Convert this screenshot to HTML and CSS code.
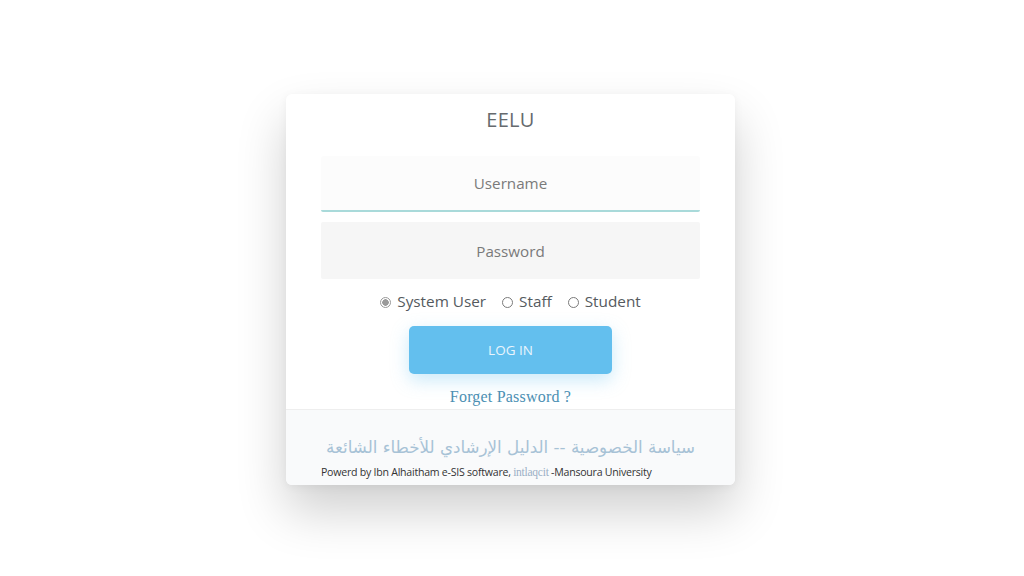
FILE: index.html
```html
<!DOCTYPE html>
<html lang="en">
<head>
<meta charset="utf-8">
<title>EELU</title>
<link rel="stylesheet" href="styles.css">
</head>
<body>
<div class="card">
  <div class="body">
    <h1 class="title">EELU</h1>
    <div class="field field-user">Username</div>
    <div class="field field-pass">Password</div>
    <div class="radios">
      <label class="radio"><span class="dot checked"></span>System User</label>
      <label class="radio"><span class="dot"></span>Staff</label>
      <label class="radio"><span class="dot"></span>Student</label>
    </div>
    <button class="login">LOG IN</button>
    <a class="forget">Forget Password ?</a>
  </div>
  <div class="footer">
    <div class="arabic" dir="rtl">سياسة الخصوصية -- الدليل الإرشادي للأخطاء الشائعة</div>
    <div class="powered">Powerd by Ibn Alhaitham e-SIS software, <span class="brand">intlaqcit</span> -Mansoura University</div>
  </div>
</div>
</body>
</html>
```
FILE: styles.css
```css
html, body {
  margin: 0;
  padding: 0;
  background: #ffffff;
}
html {
  height: 100%;
}
body {
  font-family: "Open Sans", "Noto Sans", sans-serif;
  padding: 94px 3px 0 0;
  min-height: 100%;
  box-sizing: border-box;
}
.card {
  width: 449px;
  margin: 0 auto;
  background: #ffffff;
  border-radius: 6px;
  box-shadow: 0 26px 50px rgba(0, 0, 0, 0.19), 0 2px 10px rgba(0, 0, 0, 0.05);
  overflow: hidden;
}
.body {
  padding: 12px 35px 0;
  display: flex;
  flex-direction: column;
  align-items: center;
}
.title {
  margin: 0;
  font-size: 20px;
  font-weight: 400;
  color: #666a6e;
  line-height: 27px;
  letter-spacing: 0.3px;
}
.field {
  width: 100%;
  box-sizing: border-box;
  text-align: center;
  font-size: 15.2px;
  color: #7a7a7a;
  display: flex;
  align-items: center;
  justify-content: center;
}
.field-user {
  margin-top: 23px;
  height: 56px;
  background: #fcfcfc;
  border-bottom: 2px solid #a9dada;
  border-radius: 3px 3px 2px 2px;
}
.field-pass {
  margin-top: 10px;
  height: 57px;
  background: #f6f6f6;
  border-radius: 2px;
}
.radios {
  margin-top: 10px;
  display: flex;
  gap: 16px;
  height: 24px;
  align-items: center;
  font-size: 15.3px;
  color: #555a5e;
}
.radio {
  display: flex;
  align-items: center;
  gap: 6px;
}
.dot {
  width: 11px;
  height: 11px;
  border: 1px solid #7a7a7a;
  border-radius: 50%;
  box-sizing: border-box;
  position: relative;
  top: 1px;
}
.dot.checked {
  border-color: #999;
  background: radial-gradient(circle, #9a9a9a 0 3px, #ffffff 3.5px);
}
.login {
  margin-top: 13px;
  width: 203px;
  height: 48px;
  border: none;
  border-radius: 5px;
  background: #63bfee;
  color: #e9f5fd;
  font-family: "Open Sans", "Noto Sans", sans-serif;
  font-size: 13.5px;
  box-shadow: 0 6px 18px rgba(99, 191, 238, 0.35);
}
.forget {
  margin-top: 12px;
  font-family: "Liberation Serif", serif;
  font-size: 16px;
  color: #4b8fb3;
  line-height: 22px;
  letter-spacing: 0.2px;
}
.footer {
  margin-top: 1px;
  background: #f9fafb;
  border-top: 1px solid #eeeeee;
  height: 76px;
  box-sizing: border-box;
  padding: 25px 35px 0;
  display: flex;
  flex-direction: column;
  align-items: center;
}
.arabic {
  font-family: "DejaVu Sans", sans-serif;
  font-size: 16.7px;
  color: #a7c2d6;
  line-height: 24px;
}
.powered {
  align-self: flex-start;
  font-size: 10.6px;
  color: #333;
  line-height: 16px;
  margin-top: 5px;
  letter-spacing: -0.25px;
}
.brand {
  font-family: "Liberation Serif", serif;
  color: #9bb0c6;
  font-size: 11.5px;
}
```
